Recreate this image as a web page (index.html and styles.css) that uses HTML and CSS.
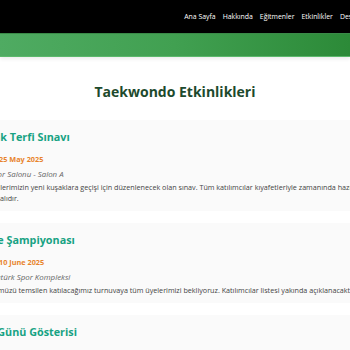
FILE: index.html
```html
<!DOCTYPE html>
<html lang="tr">
<head>
<meta charset="utf-8">
<title>Taekwondo Etkinlikleri</title>
<link rel="stylesheet" href="styles.css">
</head>
<body>
<header class="topbar">
  <div class="topbar-inner">
    <nav class="nav">
      <a href="#">Ana Sayfa</a>
      <a href="#">Hakkında</a>
      <a href="#">Eğitmenler</a>
      <a href="#">Etkinlikler</a>
      <a href="#">Destek</a>
    </nav>
  </div>
</header>
<div class="hero"></div>
<main class="page">
  <div class="content">
    <h1 class="page-title">Taekwondo Etkinlikleri</h1>
    <article class="event">
      <h2 class="event-title">Kuşak Terfi Sınavı</h2>
      <p class="event-date"><span class="label">Tarih:</span>25 May 2025</p>
      <p class="event-place">Yer: Spor Salonu - Salon A</p>
      <p class="event-desc">Öğrencilerimizin yeni kuşaklara geçişi için düzenlenecek olan sınav. Tüm katılımcılar kıyafetleriyle zamanında hazır bulunmalıdır.</p>
    </article>
    <article class="event">
      <h2 class="event-title">Bölge Şampiyonası</h2>
      <p class="event-date"><span class="label">Tarih:</span>10 June 2025</p>
      <p class="event-place">Yer: Atatürk Spor Kompleksi</p>
      <p class="event-desc">Kulübümüzü temsilen katılacağımız turnuvaya tüm üyelerimizi bekliyoruz. Katılımcılar listesi yakında açıklanacaktır.</p>
    </article>
    <article class="event">
      <h2 class="event-title">Aile Günü Gösterisi</h2>
      <p class="event-date"><span class="label">Tarih:</span>22 June 2025</p>
      <p class="event-place">Yer: Kulüp Merkezi</p>
      <p class="event-desc">Ailelerimizle birlikte keyifli bir gösteri günü.</p>
    </article>
  </div>
</main>
</body>
</html>
```
FILE: styles.css
```css
html, body {
  margin: 0;
  padding: 0;
}
body {
  font-family: "Open Sans", "Noto Sans", sans-serif;
  background: #ffffff;
  color: #333333;
  overflow: hidden;
  width: 350px;
}
.topbar {
  background: #000000;
  height: 33px;
  display: flex;
  justify-content: center;
}
.topbar-inner {
  flex: 0 0 402px;
  display: flex;
  justify-content: flex-end;
  align-items: center;
}
.nav {
  display: flex;
  gap: 7px;
  padding-right: 14px;
}
.nav a {
  color: #ffffff;
  text-decoration: none;
  font-size: 6.9px;
  line-height: 10px;
  white-space: nowrap;
}
.hero {
  height: 22px;
  background: linear-gradient(90deg, #4fab62 0%, #41a051 50%, #2c8a38 100%);
  border-top: 1px solid #3a8a48;
  border-bottom: 1px solid #5cb86c;
  box-shadow: 0 2px 4px rgba(0, 0, 0, 0.08);
}
.page {
  display: flex;
  justify-content: center;
}
.content {
  flex: 0 0 402px;
  display: flex;
  flex-direction: column;
  gap: 12px;
  padding-top: 25px;
}
.page-title {
  margin: 0 0 6px;
  text-align: center;
  font-size: 14px;
  line-height: 20px;
  font-weight: 700;
  color: #1d4a2d;
}
.event {
  background: #fafafa;
  padding: 9px 0 7.5px;
}
.event-title {
  margin: 0;
  font-size: 10.8px;
  line-height: 16px;
  font-weight: 700;
  color: #17a283;
}
.event-date {
  margin: 8.5px 0 0;
  font-size: 7.3px;
  line-height: 11px;
  font-weight: 700;
  color: #e8832b;
}
.label {
  margin-right: 4px;
}
.event-place {
  margin: 3.5px 0 0;
  font-size: 7.9px;
  line-height: 12px;
  font-style: italic;
  color: #666666;
}
.event-desc {
  margin: 1.5px 0 0;
  font-size: 7.2px;
  line-height: 11px;
  color: #444444;
}
```
